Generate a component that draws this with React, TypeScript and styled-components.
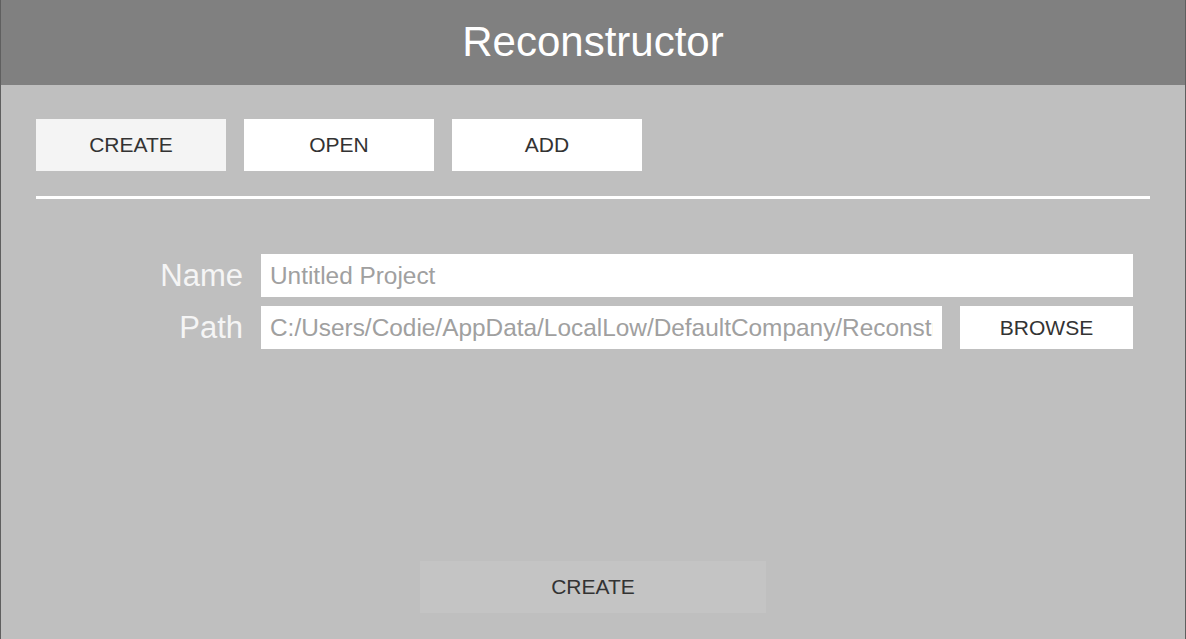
import React from "react";
import styled, { createGlobalStyle } from "styled-components";

const GlobalStyle = createGlobalStyle`
  html, body {
    margin: 0;
    padding: 0;
    width: 1186px;
    height: 639px;
    overflow: hidden;
    background: #bfbfbf;
  }
  * { box-sizing: border-box; }
`;

const Window = styled.div`
  width: 1186px;
  height: 639px;
  display: flex;
  flex-direction: column;
  background: #bfbfbf;
  border-left: 1px solid #5f5f5f;
  border-right: 1px solid #5f5f5f;
  font-family: "Liberation Sans", Arial, sans-serif;
`;

const Header = styled.header`
  height: 85px;
  flex: none;
  background: #808080;
  display: flex;
  align-items: center;
  justify-content: center;
  color: #ffffff;
  font-size: 42px;
  padding-bottom: 1px;
`;

const Content = styled.main`
  flex: 1;
  display: flex;
  flex-direction: column;
  padding: 34px 35px 26px 35px;
`;

const Tabs = styled.nav`
  display: flex;
  gap: 18px;
`;

const Tab = styled.button<{ $active?: boolean }>`
  width: 190px;
  height: 52px;
  border: none;
  padding: 0;
  background: ${(p) => (p.$active ? "#f4f4f4" : "#ffffff")};
  color: #333333;
  font-family: "Liberation Sans", Arial, sans-serif;
  font-size: 21px;
`;

const Divider = styled.hr`
  margin: 25px 0 0 0;
  height: 3px;
  border: none;
  background: #ffffff;
`;

const Form = styled.div`
  margin-top: 55px;
  padding-right: 17px;
  display: grid;
  grid-template-columns: 207px 1fr;
  column-gap: 18px;
  row-gap: 9px;
  align-items: center;
`;

const Label = styled.label`
  text-align: right;
  color: #f5f5f5;
  font-size: 31px;
  line-height: 43px;
`;

const FieldRow = styled.div`
  display: flex;
  gap: 18px;
`;

const TextField = styled.input`
  flex: 1;
  min-width: 0;
  height: 43px;
  border: none;
  outline: none;
  background: #ffffff;
  padding: 0 9px;
  color: #a0a0a0;
  font-family: "Liberation Sans", Arial, sans-serif;
  font-size: 24.4px;
  &::placeholder {
    color: #a0a0a0;
    opacity: 1;
  }
`;

const SmallButton = styled.button`
  width: 173px;
  height: 43px;
  flex: none;
  border: none;
  padding: 0;
  background: #ffffff;
  color: #333333;
  font-family: "Liberation Sans", Arial, sans-serif;
  font-size: 21px;
`;

const Footer = styled.div`
  margin-top: auto;
  display: flex;
  justify-content: center;
`;

const SubmitButton = styled.button`
  width: 346px;
  height: 52px;
  border: none;
  padding: 0;
  background: #c4c4c4;
  color: #333333;
  font-family: "Liberation Sans", Arial, sans-serif;
  font-size: 21px;
`;

export default function App() {
  return (
    <>
      <GlobalStyle />
      <Window>
        <Header>Reconstructor</Header>
        <Content>
          <Tabs>
            <Tab $active>CREATE</Tab>
            <Tab>OPEN</Tab>
            <Tab>ADD</Tab>
          </Tabs>
          <Divider />
          <Form>
            <Label>Name</Label>
            <FieldRow>
              <TextField placeholder="Untitled Project" />
            </FieldRow>
            <Label>Path</Label>
            <FieldRow>
              <TextField
                readOnly
                value="C:/Users/Codie/AppData/LocalLow/DefaultCompany/Reconstructor"
              />
              <SmallButton>BROWSE</SmallButton>
            </FieldRow>
          </Form>
          <Footer>
            <SubmitButton>CREATE</SubmitButton>
          </Footer>
        </Content>
      </Window>
    </>
  );
}
